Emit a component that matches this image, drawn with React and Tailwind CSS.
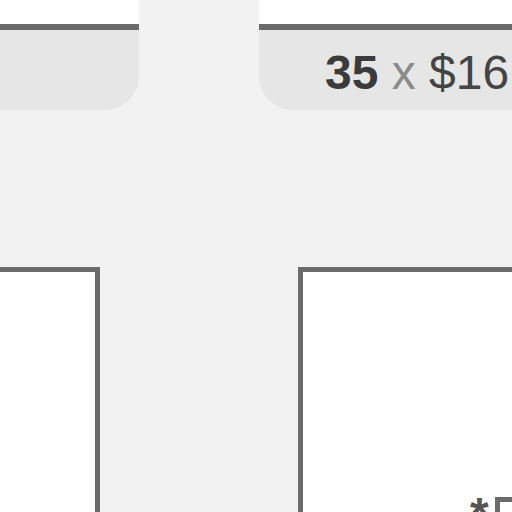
export default function App() {
  return (
    <div
      className="w-[512px] h-[512px] overflow-hidden bg-[#f2f2f2] flex flex-col"
      style={{ fontFamily: '"Liberation Sans", Arial, sans-serif' }}
    >
      <div className="flex items-start shrink-0">
        <div className="w-[139px] shrink-0 flex flex-col">
          <div className="h-[24px] bg-white" />
          <div className="h-[86px] border-t-[6px] border-[#6b6b6b] bg-[#e6e6e6] rounded-br-[34px]" />
        </div>
        <div className="w-[120px] shrink-0" />
        <div className="w-[400px] shrink-0 flex flex-col">
          <div className="h-[24px] bg-white" />
          <div className="h-[86px] border-t-[6px] border-[#6b6b6b] bg-[#e6e6e6] rounded-bl-[34px] pt-[19px] pl-[66px] whitespace-nowrap text-[48px] leading-[48px]">
            <span className="font-bold text-[#3b3b3b]">35</span>
            <span className="text-[#8a8a8a]"> x </span>
            <span className="text-[#444444]">$16</span>
          </div>
        </div>
      </div>
      <div className="h-[157px] shrink-0" />
      <div className="flex items-start shrink-0">
        <div className="w-[100px] h-[260px] shrink-0 bg-white border-t-[5px] border-r-[5px] border-[#6b6b6b]" />
        <div className="w-[198px] shrink-0" />
        <div className="w-[300px] h-[260px] shrink-0 bg-white border-t-[5px] border-l-[5px] border-[#6b6b6b] pt-[219px] pl-[167px] flex items-start">
          <span className="text-[48px] leading-[48px] font-bold text-[#555555]">*</span>
          <div className="ml-[6px] mt-[6px] w-[80px] h-[60px] border-[5px] border-[#6b6b6b] bg-white" />
        </div>
      </div>
    </div>
  );
}
